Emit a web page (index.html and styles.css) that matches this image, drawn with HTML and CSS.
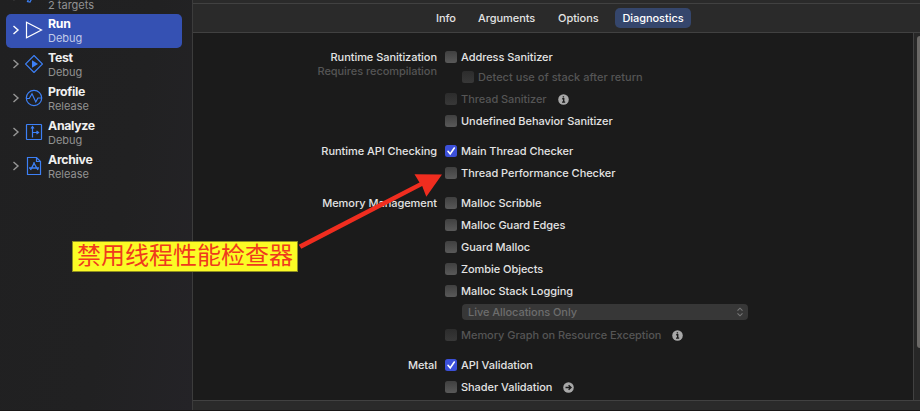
FILE: index.html
```html
<!DOCTYPE html>
<html lang="en">
<head>
<meta charset="utf-8">
<title>Scheme Editor</title>
<link rel="stylesheet" href="styles.css">
</head>
<body>
<div class="window">
  <aside class="sidebar">
    <div class="item build">
      <svg class="chev" viewBox="0 0 8 10"><path d="M1.500 1 6 5 1.500 9"/></svg>
      <svg class="icon" viewBox="0 0 18 18"><path d="M2.500 14.500 7 5l2.500 1.500-4.500 8.500zM10 4l2 1"/></svg>
      <div class="text"><span>2 targets</span></div>
    </div>
    <div class="item selected">
      <svg class="chev" viewBox="0 0 8 10"><path d="M1.500 1 6 5 1.500 9"/></svg>
      <svg class="icon" viewBox="0 0 18 18"><path d="M1.500 1.300 16.500 9 1.500 16.700z"/></svg>
      <div class="text"><b>Run</b><span>Debug</span></div>
    </div>
    <div class="item">
      <svg class="chev" viewBox="0 0 8 10"><path d="M1.500 1 6 5 1.500 9"/></svg>
      <svg class="icon" viewBox="0 0 18 18"><path d="M9 .5 17.500 9 9 17.500.5 9z"/><path class="solid" d="M7 5.200 13 9 7 12.800z"/></svg>
      <div class="text"><b>Test</b><span>Debug</span></div>
    </div>
    <div class="item">
      <svg class="chev" viewBox="0 0 8 10"><path d="M1.500 1 6 5 1.500 9"/></svg>
      <svg class="icon" viewBox="0 0 18 18"><circle cx="9" cy="9" r="7.700"/><path d="M1.500 9.500h2.800L7 4.800l3.800 8.200 2.100-4h3.600"/></svg>
      <div class="text"><b>Profile</b><span>Release</span></div>
    </div>
    <div class="item">
      <svg class="chev" viewBox="0 0 8 10"><path d="M1.500 1 6 5 1.500 9"/></svg>
      <svg class="icon" viewBox="0 0 18 18"><rect x="1.500" y="1.500" width="15" height="15" rx=".5"/><path d="M7.500 14.500V4.500M6 5.500l1.500-2L9 5.500M7.500 9.500h5M11.500 8l2 1.500-2 1.500"/></svg>
      <div class="text"><b>Analyze</b><span>Debug</span></div>
    </div>
    <div class="item">
      <svg class="chev" viewBox="0 0 8 10"><path d="M1.500 1 6 5 1.500 9"/></svg>
      <svg class="icon" viewBox="0 0 18 18"><path d="M2.500.5h9l4 4v13h-13zM11.500.5v4h4"/><path class="heavy" d="M9.500 5.500 5.500 13M8.500 5.500l4.500 7.500M4 11h10"/></svg>
      <div class="text"><b>Archive</b><span>Release</span></div>
    </div>
  </aside>

  <main class="main">
    <nav class="tabs">
      <span class="tab info-tab">Info</span>
      <span class="tab arguments">Arguments</span>
      <span class="tab options">Options</span>
      <span class="tab active">Diagnostics</span>
    </nav>
    <div class="content">
      <div class="form">
        <section class="group">
          <div class="label"><span>Runtime Sanitization</span><span class="note">Requires recompilation</span></div>
          <div class="rows">
            <div class="row"><i class="box"></i><span>Address Sanitizer</span></div>
            <div class="row nested off"><i class="box"></i><span>Detect use of stack after return</span></div>
            <div class="row off"><i class="box"></i><span>Thread Sanitizer</span><svg class="badge" viewBox="0 0 11 11"><circle cx="5.500" cy="5.500" r="5.300"/><path d="M4.200 4.800h1.500v3M4 8.100h3.200M5.400 2.300v1.300"/></svg></div>
            <div class="row"><i class="box"></i><span>Undefined Behavior Sanitizer</span></div>
          </div>
        </section>
        <section class="group">
          <div class="label"><span>Runtime API Checking</span></div>
          <div class="rows">
            <div class="row"><i class="box on"><svg viewBox="0 0 12 12"><path d="M3 6.300 5.200 9 9.300 3"/></svg></i><span>Main Thread Checker</span></div>
            <div class="row"><i class="box"></i><span>Thread Performance Checker</span></div>
          </div>
        </section>
        <section class="group">
          <div class="label"><span>Memory Management</span></div>
          <div class="rows">
            <div class="row"><i class="box"></i><span>Malloc Scribble</span></div>
            <div class="row"><i class="box"></i><span>Malloc Guard Edges</span></div>
            <div class="row"><i class="box"></i><span>Guard Malloc</span></div>
            <div class="row"><i class="box"></i><span>Zombie Objects</span></div>
            <div class="row"><i class="box"></i><span>Malloc Stack Logging</span></div>
            <div class="popup"><span>Live Allocations Only</span><svg viewBox="0 0 8 10"><path d="M1.500 3.700 4 1.200l2.500 2.500M1.500 6.300 4 8.800l2.500-2.500"/></svg></div>
            <div class="row off"><i class="box"></i><span>Memory Graph on Resource Exception</span><svg class="badge" viewBox="0 0 11 11"><circle cx="5.500" cy="5.500" r="5.300"/><path d="M4.200 4.800h1.500v3M4 8.100h3.200M5.400 2.300v1.300"/></svg></div>
          </div>
        </section>
        <section class="group">
          <div class="label"><span>Metal</span></div>
          <div class="rows">
            <div class="row"><i class="box on"><svg viewBox="0 0 12 12"><path d="M3 6.300 5.200 9 9.300 3"/></svg></i><span>API Validation</span></div>
            <div class="row"><i class="box"></i><span>Shader Validation</span><svg class="badge" viewBox="0 0 11 11"><circle cx="5.500" cy="5.500" r="5.300"/><path d="M2.500 5.500h5M5.600 3.200l2.400 2.300-2.400 2.300"/></svg></div>
          </div>
        </section>
      </div>
      <div class="scroller"><div class="thumb"></div></div>
    </div>
    <footer class="footer"></footer>
  </main>
</div>
<svg class="arrow" viewBox="0 0 920 411"><path d="M301.300 248.700 422.200 186 426.300 196.700 442 174.500 414.500 174.200 419.500 182.500 298.700 244.800z"/></svg>
<div class="callout" lang="zh-CN">禁用线程性能检查器</div>
</body>
</html>
```

FILE: styles.css
```css
* { box-sizing: border-box; }
body {
  margin: 0;
  width: 920px;
  height: 411px;
  overflow: hidden;
  position: relative;
  background: #1b1b1b;
  color: #e3e3e3;
  font: 500 11px/14px Inter, "Noto Sans CJK SC", sans-serif;
  letter-spacing: -.05px;
}
.window { display: flex; height: 411px; border-bottom: 1px solid #191717; }

.sidebar {
  width: 193px;
  flex: none;
  padding: 0 10px 0 6px;
  overflow: hidden;
  background: linear-gradient(100deg, #202021, #212122 60%, #242327);
  border-right: 1px solid #3c3c3c;
}
.item {
  display: flex;
  align-items: center;
  height: 34px;
  padding-left: 6px;
  border-radius: 5px;
}
.item.build { margin-top: -20px; }
.item.build .text { padding-top: 16px; }
.item.selected { background: #3551b3; }
.chev { width: 8px; height: 10px; margin-top: -2px; flex: none; fill: none; stroke: #969696; stroke-width: 1.4; }
.icon { width: 18px; height: 18px; margin: -2px 7px 0 5px; flex: none; fill: none; stroke: #3d80f6; stroke-width: 1.2; }
.icon .solid { fill: #3d80f6; stroke: none; }
.icon .heavy { stroke-width: 1.4; }
.selected .chev, .selected .icon { stroke: #fff; }
.text { display: flex; flex-direction: column; margin: -1px 0 0 -2px; }
.text b { color: #f0f0f0; font-size: 12.300px; font-weight: 700; line-height: 14px; letter-spacing: -.3px; }
.text span { color: #929292; font-size: 11px; font-weight: 400; line-height: 14px; letter-spacing: 0; }
.selected .text b { color: #fff; }
.selected .text span { color: #c2cbe9; }

.main { flex: 1; display: flex; flex-direction: column; min-width: 0; background: #2a2a2a; }
.tabs {
  height: 30px;
  margin-top: 3px;
  padding: 0 0 0 231px;
  display: flex;
  align-items: center;
  border-top: 1px solid #414141;
  border-bottom: 1px solid #414141;
  flex: none;
}
.tab { height: 20px; line-height: 20px; padding: 0 7px; margin-right: 8px; border-radius: 5px; white-space: nowrap; }
.info-tab { padding-left: 12px; width: 39px; }
.arguments { width: 72px; }
.options { width: 56px; }
.tab.active { background: #35466c; color: #fff; padding: 0; width: 76px; text-align: center; margin: 0; }

.content { flex: 1; display: flex; min-height: 0; background: #1b1b1b; }
.form { flex: 1; padding-top: 13px; display: flex; flex-direction: column; gap: 8px; }
.group { display: flex; flex: none; gap: 8px; }
.label { width: 244px; flex: none; display: flex; flex-direction: column; text-align: right; padding-top: 4px; }
.note { color: #555; }
.rows { flex: 1; }
.row { height: 22px; display: flex; align-items: center; white-space: nowrap; }
.row.nested { height: 18px; margin-bottom: 2px; padding-left: 17px; letter-spacing: .03px; }
.box {
  width: 12px;
  height: 12px;
  flex: none;
  margin-right: 4px;
  border-radius: 2.500px;
  background: linear-gradient(#404040, #595959);
}
.off { color: #555; }
.off .box { background: linear-gradient(#2c2c2c, #383838); }
.box.on { background: #3c50d9; }
.box svg { display: block; fill: none; stroke: #fff; stroke-width: 1.6; stroke-linecap: round; }
.badge { width: 11px; height: 11px; margin-left: 11px; fill: #a8a8a8; }
.badge path { fill: none; stroke: #1b1b1b; stroke-width: 1.4; }
.popup {
  display: flex;
  align-items: center;
  justify-content: space-between;
  width: 286px;
  height: 16px;
  margin: 2px 0 4px 17px;
  padding: 0 4px 0 6px;
  border-radius: 4px;
  background: #373737;
  color: #6d6d6d;
}
.popup svg { width: 8px; height: 10px; fill: none; stroke: #777; stroke-width: 1.1; }
.scroller { width: 7px; padding: 3px 0 0 3px; background: #272727; border-left: 1px solid #414141; flex: none; }
.thumb { height: 312px; border-radius: 3px 0 0 3px; background: #6b6967; }
.footer { height: 10px; flex: none; border-top: 1px solid #414141; }

.arrow { position: absolute; inset: 0; width: 920px; height: 411px; fill: #f02d1f; }
.callout {
  position: absolute;
  left: 72px;
  top: 241px;
  width: 226px;
  height: 31px;
  border: 1px solid #8d8d20;
  background: #fbfb25;
  color: #ef3a1d;
  font: 400 24px/24px "Noto Sans CJK SC", sans-serif;
  letter-spacing: 0;
  text-align: center;
  white-space: nowrap;
}
```
